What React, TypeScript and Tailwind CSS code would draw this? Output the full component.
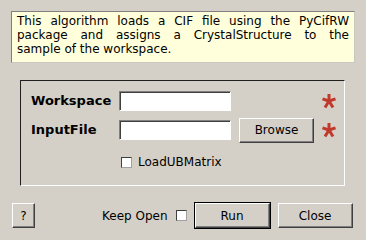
import React from 'react';

const font = { fontFamily: '"DejaVu Sans", Verdana, sans-serif' };

function Star() {
  return (
    <svg width="16" height="16" viewBox="0 0 16 16" className="shrink-0">
      <g stroke="#c0392b" strokeWidth="3" strokeLinecap="butt">
        <line x1="8" y1="1" x2="8" y2="8" />
        <line x1="8" y1="8" x2="1.5" y2="5.8" />
        <line x1="8" y1="8" x2="14.5" y2="5.8" />
        <line x1="8" y1="8" x2="4" y2="14.5" />
        <line x1="8" y1="8" x2="12" y2="14.5" />
      </g>
    </svg>
  );
}

function Btn({ children, className = '', isDefault = false }: { children: React.ReactNode; className?: string; isDefault?: boolean }) {
  const inner = (
    <div className="flex h-full w-full items-center justify-center border border-t-white border-l-white border-b-[#404040] border-r-[#404040] bg-[#d4d0c8] shadow-[inset_-1px_-1px_0_#808080] text-[12px] text-black">
      {children}
    </div>
  );
  if (isDefault) {
    return <div className={`border border-black ${className}`}>{inner}</div>;
  }
  return <div className={className}>{inner}</div>;
}

function Field() {
  return (
    <div className="h-[20px] w-[112px] border border-t-[#808080] border-l-[#808080] border-b-white border-r-white bg-white shadow-[inset_1px_1px_0_#404040]" />
  );
}

function Check() {
  return (
    <div className="h-[11px] w-[11px] border border-t-[#404040] border-l-[#404040] border-b-[#a0a0a0] border-r-[#a0a0a0] bg-white" />
  );
}

export default function App() {
  return (
    <div className="flex h-[240px] w-[366px] flex-col bg-[#d4d0c8] text-black" style={font}>
      <div className="mx-[11px] mt-[11px] h-[52px] border border-t-[#808080] border-l-[#808080] border-b-[#c8c8c0] border-r-[#c8c8c0] bg-[#ffffdc] px-[5px] pt-[2px] text-[12px] leading-[14px]">
        <div className="text-justify [text-align-last:justify]">This algorithm loads a CIF file using the PyCifRW</div>
        <div className="text-justify [text-align-last:justify]">package and assigns a CrystalStructure to the</div>
        <div>sample of the workspace.</div>
      </div>

      <div className="ml-[20px] mt-[17px] h-[106px] w-[325px] border border-t-[#202020] border-l-[#202020] border-b-white border-r-white pl-[10px] pt-[10px]">
        <div className="flex h-[20px] items-center">
          <div className="w-[88px] text-[13px] font-bold">Workspace</div>
          <Field />
          <div className="ml-[90px]">
            <Star />
          </div>
        </div>
        <div className="mt-[9px] flex h-[20px] items-center">
          <div className="w-[88px] text-[13px] font-bold">InputFile</div>
          <Field />
          <Btn className="ml-[8px] h-[25px] w-[75px]">Browse</Btn>
          <div className="ml-[7px]">
            <Star />
          </div>
        </div>
        <div className="ml-[90px] mt-[13px] flex items-center gap-[6px] text-[12px]">
          <Check />
          <span>LoadUBMatrix</span>
        </div>
      </div>

      <div className="mt-[16px] flex items-center pl-[12px]">
        <Btn className="h-[25px] w-[23px]">?</Btn>
        <span className="ml-[67px] text-[12px]">Keep Open</span>
        <div className="ml-[8px]">
          <Check />
        </div>
        <Btn isDefault className="ml-[7px] h-[27px] w-[77px]">Run</Btn>
        <Btn className="ml-[7px] h-[25px] w-[75px]">Close</Btn>
      </div>
    </div>
  );
}
